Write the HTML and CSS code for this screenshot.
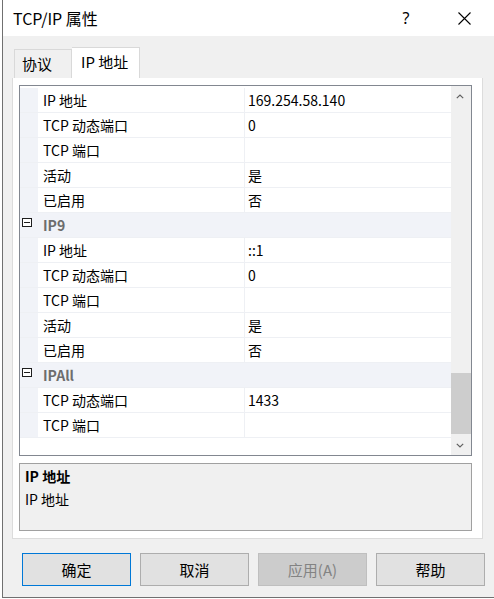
FILE: index.html
```html
<!DOCTYPE html>
<html lang="zh-CN">
<head>
<meta charset="utf-8">
<title>TCP/IP 属性</title>
<link rel="stylesheet" href="styles.css">
</head>
<body>
<div class="window">
  <div class="titlebar">
    <span class="title">TCP/IP 属性</span>
    <span class="help">?</span>
    <span class="close"><svg width="13" height="13" viewBox="0 0 13 13"><path d="M0.5 0.5 L12.5 12.5 M12.5 0.5 L0.5 12.5" stroke="#000" stroke-width="1.1" fill="none"/></svg></span>
  </div>
  <div class="tabs">
    <div class="tab">协议</div>
    <div class="tab active">IP 地址</div>
  </div>
  <div class="panel">
    <div class="grid">
      <div class="rows">
        <div class="row"><span class="m"></span><span class="k">IP 地址</span><span class="v">169.254.58.140</span></div>
        <div class="row"><span class="m"></span><span class="k">TCP 动态端口</span><span class="v">0</span></div>
        <div class="row"><span class="m"></span><span class="k">TCP 端口</span><span class="v"></span></div>
        <div class="row"><span class="m"></span><span class="k">活动</span><span class="v">是</span></div>
        <div class="row"><span class="m"></span><span class="k">已启用</span><span class="v">否</span></div>
        <div class="row cat"><span class="m"><span class="minus"></span></span><span class="ck">IP9</span></div>
        <div class="row"><span class="m"></span><span class="k">IP 地址</span><span class="v">::1</span></div>
        <div class="row"><span class="m"></span><span class="k">TCP 动态端口</span><span class="v">0</span></div>
        <div class="row"><span class="m"></span><span class="k">TCP 端口</span><span class="v"></span></div>
        <div class="row"><span class="m"></span><span class="k">活动</span><span class="v">是</span></div>
        <div class="row"><span class="m"></span><span class="k">已启用</span><span class="v">否</span></div>
        <div class="row cat"><span class="m"><span class="minus"></span></span><span class="ck">IPAll</span></div>
        <div class="row"><span class="m"></span><span class="k">TCP 动态端口</span><span class="v">1433</span></div>
        <div class="row"><span class="m"></span><span class="k">TCP 端口</span><span class="v"></span></div>
      </div>
      <div class="scrollbar">
        <div class="sb-btn"><svg width="8" height="5" viewBox="0 0 8 5"><path d="M0.8 4.2 L4 1 L7.2 4.2" stroke="#606060" stroke-width="1.2" fill="none"/></svg></div>
        <div class="sb-track"><div class="sb-thumb"></div></div>
        <div class="sb-btn"><svg width="8" height="5" viewBox="0 0 8 5"><path d="M0.8 0.8 L4 4 L7.2 0.8" stroke="#606060" stroke-width="1.2" fill="none"/></svg></div>
      </div>
    </div>
    <div class="desc">
      <div class="desc-title">IP 地址</div>
      <div class="desc-text">IP 地址</div>
    </div>
  </div>
  <div class="buttons">
    <div class="btn default">确定</div>
    <div class="btn">取消</div>
    <div class="btn disabled">应用(A)</div>
    <div class="btn">帮助</div>
  </div>
</div>
</body>
</html>
```

FILE: styles.css
```css
* { box-sizing: border-box; }
html, body { margin: 0; padding: 0; background: #ffffff; }
body {
  font-family: "Noto Sans CJK SC", "Noto Sans", sans-serif;
  font-size: 14px;
  color: #000;
}
.window {
  margin-left: 2px;
  width: 492px;
  height: 598px;
  border-left: 1px solid #707070;
  border-bottom: 1px solid #707070;
  background: #f0f0f0;
  overflow: hidden;
}
.titlebar {
  height: 36px;
  background: #ffffff;
  display: flex;
  align-items: center;
  padding-left: 10px;
  padding-right: 23px;
}
.title { font-size: 16px; flex: 1; }
.help { font-size: 16px; width: 10px; text-align: center; margin-right: 47px; font-family: "Noto Sans", sans-serif; }
.close { display: flex; width: 13px; height: 13px; }
.tabs {
  height: 42px;
  display: flex;
  align-items: flex-end;
  padding-left: 11px;
}
.tab {
  height: 29px;
  width: 58px;
  border: 1px solid #d9d9d9;
  border-bottom: none;
  background: #f0f0f0;
  font-size: 15px;
  padding-left: 7px;
  padding-bottom: 2px;
  display: flex;
  align-items: center;
}
.tab.active {
  height: 31px;
  width: 68px;
  border-left: none;
  background: #ffffff;
  padding-left: 9px;
  padding-bottom: 4px;
}
.panel {
  margin-left: 9px;
  width: 471px;
  height: 461px;
  background: #ffffff;
  border: 1px solid #dcdcdc;
  border-top: none;
  padding: 7px 0 0 6px;
}
.grid {
  width: 453px;
  height: 371px;
  border: 1px solid #828790;
  display: flex;
}
.rows {
  flex: 1;
  overflow: hidden;
  padding-top: 2px;
}
.row {
  height: 25px;
  border-bottom: 1px solid #eef0f4;
  display: flex;
  align-items: stretch;
}
.m {
  width: 18px;
  background: #f1f3f8;
  position: relative;
}
.k {
  width: 207px;
  border-right: 1px solid #eef0f4;
  padding-left: 5px;
  padding-bottom: 1px;
  display: flex;
  align-items: center;
  white-space: nowrap;
}
.v {
  flex: 1;
  padding-left: 3px;
  padding-bottom: 1px;
  display: flex;
  align-items: center;
}
.row.cat { background: #f1f3f8; }
.ck {
  padding-left: 5px;
  padding-bottom: 1px;
  display: flex;
  align-items: center;
  font-weight: bold;
  color: #6d6d6d;
}
.minus {
  position: absolute;
  left: 2px;
  top: 5px;
  width: 10px;
  height: 9px;
  border: 1px solid #1e1e1e;
  background: #fff;
}
.minus::after {
  content: "";
  position: absolute;
  left: 1px;
  right: 1px;
  top: 3px;
  height: 1px;
  background: #1e1e1e;
}
.scrollbar {
  width: 20px;
  background: #f0f0f0;
  display: flex;
  flex-direction: column;
}
.sb-btn {
  height: 20px;
  display: flex;
  align-items: center;
  justify-content: center;
  padding-right: 2px;
}
.sb-track { flex: 1; }
.sb-thumb {
  margin-top: 267px;
  height: 61px;
  background: #cdcdcd;
}
.desc {
  margin-top: 7px;
  width: 453px;
  height: 68px;
  border: 1px solid #a0a0a0;
  background: #f0f0f0;
  padding: 1px 5px;
  line-height: 23px;
}
.desc-title { font-weight: bold; }
.buttons {
  margin-top: 14px;
  padding-left: 19px;
  display: flex;
  gap: 9px;
}
.btn {
  width: 109px;
  height: 33px;
  border: 1px solid #adadad;
  background: #e1e1e1;
  font-size: 15px;
  display: flex;
  align-items: center;
  justify-content: center;
}
.btn.default { border-color: #0078d7; }
.btn.disabled { background: #cccccc; border-color: #bfbfbf; color: #838383; }
```
